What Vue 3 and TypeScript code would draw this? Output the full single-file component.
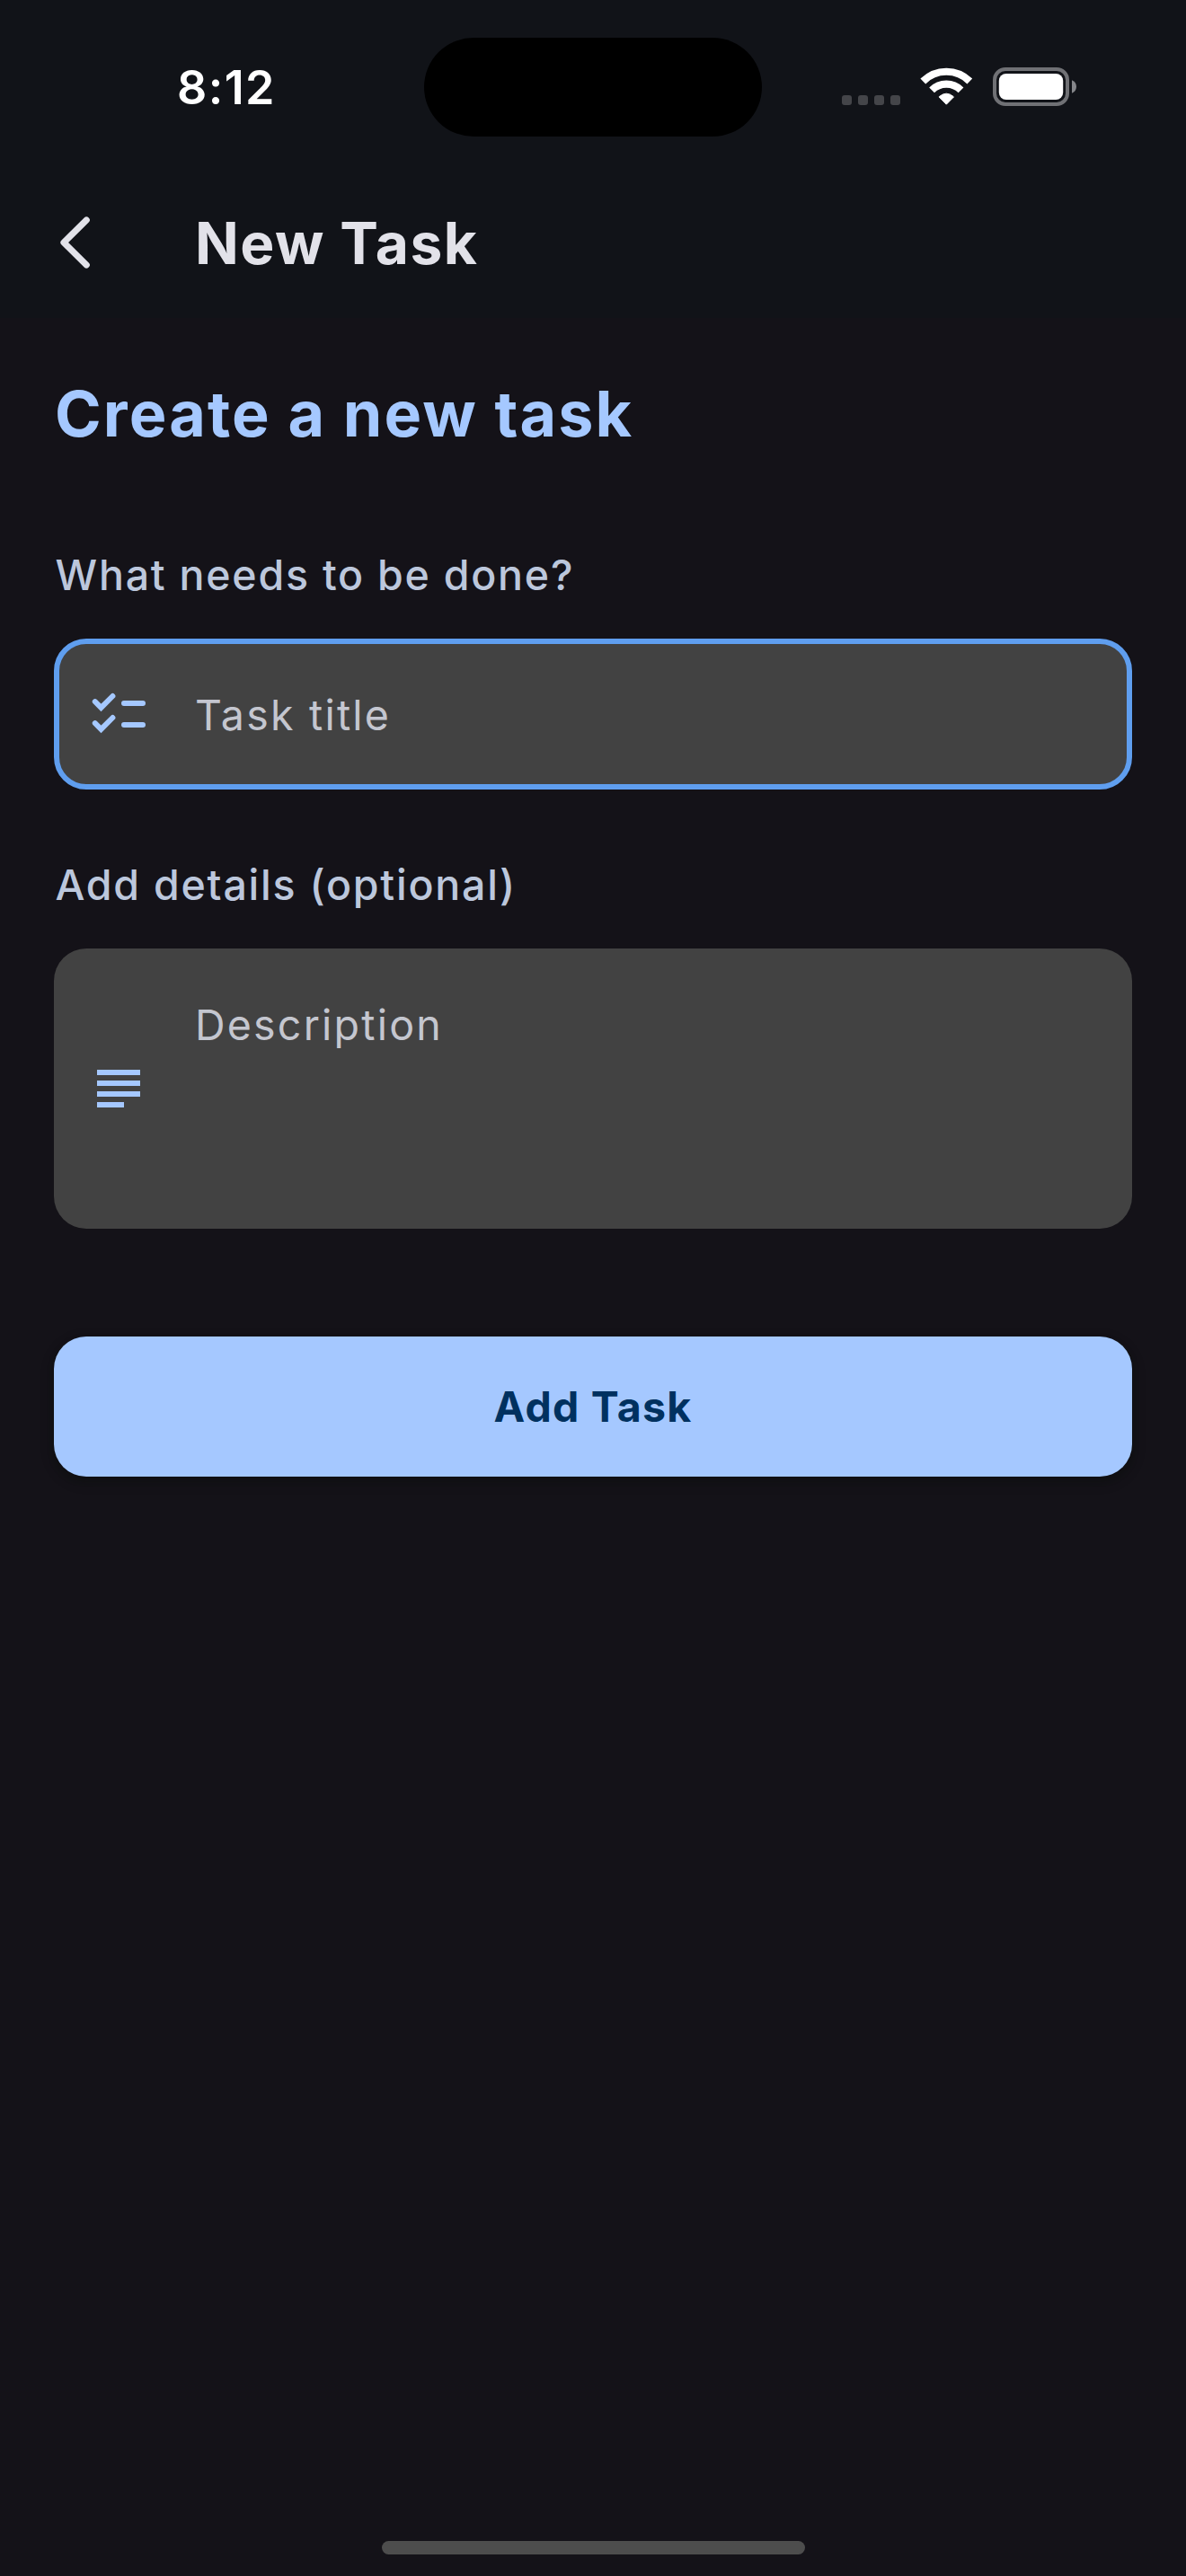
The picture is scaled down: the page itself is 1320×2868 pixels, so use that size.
<script setup lang="ts">
interface Field {
  id: string
  label: string
  placeholder: string
  icon: 'checklist' | 'notes'
  focused: boolean
  multiline: boolean
}

const fields: Field[] = [
  {
    id: 'title',
    label: 'What needs to be done?',
    placeholder: 'Task title',
    icon: 'checklist',
    focused: true,
    multiline: false,
  },
  {
    id: 'details',
    label: 'Add details (optional)',
    placeholder: 'Description',
    icon: 'notes',
    focused: false,
    multiline: true,
  },
]
</script>

<template>
  <div class="screen">
    <header class="top">
      <div class="status">
        <span class="clock">8:12</span>
        <div class="island"></div>
        <div class="indicators">
          <div class="signal"><i v-for="n in 4" :key="n"></i></div>
          <svg class="wifi" width="60" height="44" viewBox="0 0 60 44">
            <g fill="none" stroke="#fff" stroke-width="8.2">
              <path d="M3.3 16.5A36.8 36.8 0 0 1 55.3 16.5" />
              <path d="M13.1 26.3A22.9 22.9 0 0 1 45.5 26.3" />
            </g>
            <path
              d="M29.3 42.2L21.1 33.9Q29.3 26.4 37.5 33.9Z"
              fill="#fff"
              stroke="#fff"
              stroke-width="1"
              stroke-linejoin="round"
            />
          </svg>
          <svg class="battery" width="94" height="43" viewBox="0 0 94 43">
            <rect x="2" y="2" width="81" height="39" rx="12" fill="none" stroke="#707175" stroke-width="4" />
            <rect x="6.8" y="7" width="71.4" height="29" rx="8" fill="#fff" />
            <path d="M88 14.2C91.2 15.4 93 18.2 93 21.5S91.2 27.6 88 28.8Z" fill="#85868a" />
          </svg>
        </div>
      </div>
      <div class="appbar">
        <svg class="back" width="40" height="64" viewBox="0 0 40 64">
          <path
            d="M32.2 7L7 32L32.2 57"
            fill="none"
            stroke="#e2e2e9"
            stroke-width="7.2"
            stroke-linecap="round"
            stroke-linejoin="round"
          />
        </svg>
        <h1>New Task</h1>
      </div>
    </header>

    <main>
      <h2>Create a new task</h2>
      <section v-for="f in fields" :key="f.id" class="group">
        <div class="label">{{ f.label }}</div>
        <div class="field" :class="{ focused: f.focused, multiline: f.multiline }">
          <svg v-if="f.icon === 'checklist'" width="72" height="72" viewBox="0 0 72 72">
            <g fill="none" stroke="#a5c8ff" stroke-width="6" stroke-linecap="round">
              <path stroke-linejoin="miter" d="M9.8 22.2L16.5 28.9L29.4 16" />
              <path stroke-linejoin="miter" d="M9.8 46.2L16.5 52.9L29.4 40" />
              <path d="M42 24H63M42 48H63" />
            </g>
          </svg>
          <svg v-else width="72" height="72" viewBox="0 0 72 72">
            <path fill="#a5c8ff" d="M12 15h48v6H12zM12 27h48v6H12zM12 39h48v6H12zM12 51h30v6H12z" />
          </svg>
          <span class="hint">{{ f.placeholder }}</span>
        </div>
      </section>
      <button type="button">Add Task</button>
    </main>

    <footer><div class="home"></div></footer>
  </div>
</template>

<style>
body {
  background: #141218;
}
</style>

<style scoped>
.screen {
  box-sizing: border-box;
  width: 1320px;
  height: 2868px;
  display: flex;
  flex-direction: column;
  overflow: hidden;
  background: #141218;
  font-family: Inter, 'Liberation Sans', sans-serif;
}

.top {
  height: 354px;
  background: #111318;
}

.status {
  display: grid;
  grid-template-columns: 472px 376px 472px;
  align-items: start;
  height: 186px;
}

.clock {
  padding: 68px 0 0 197px;
  line-height: 60px;
  font-size: 52px;
  font-weight: 600;
  letter-spacing: 1.38px;
  color: #fff;
}

.island {
  height: 110px;
  margin-top: 42px;
  border-radius: 55px;
  background: #000;
}

.indicators {
  display: flex;
  align-items: flex-start;
  padding: 74px 0 0 89px;
}

.signal {
  display: flex;
  gap: 7px;
  padding-top: 32px;
  margin-right: 22px;
}

.signal i {
  width: 11px;
  height: 11px;
  border-radius: 3px;
  background: #444549;
}

.wifi {
  display: block;
}

.battery {
  display: block;
  margin: 1px 0 0 21px;
}

.appbar {
  display: flex;
  align-items: center;
  height: 168px;
  padding-left: 64px;
}

.back {
  display: block;
}

h1 {
  margin: 2px 0 0 113px;
  line-height: 80px;
  font-size: 64px;
  font-weight: 700;
  letter-spacing: 1.44px;
  color: #e2e2e9;
}

main {
  flex: 1;
  padding: 60px 60px 0;
}

h2 {
  margin: 0 0 100px 1px;
  line-height: 93px;
  font-size: 70px;
  font-weight: 700;
  letter-spacing: 2.08px;
  color: #a5c8ff;
}

.group {
  margin-bottom: 73px;
}

.label {
  margin-bottom: 38px;
  padding-left: 1.5px;
  line-height: 66px;
  font-size: 46.5px;
  font-weight: 450;
  letter-spacing: 1.76px;
  color: #bcc7dc;
}

.field {
  box-sizing: border-box;
  display: flex;
  align-items: center;
  height: 168px;
  padding: 0 36px;
  border-radius: 36px;
  background: #424242;
}

.focused {
  padding: 0 30px;
  border: 6px solid #5f9eef;
}

.multiline {
  height: 312px;
}

.hint {
  margin: 2px 0 0 49px;
  line-height: 66px;
  font-size: 46.5px;
  letter-spacing: 2.22px;
  color: #c4c6cf;
}

.multiline .hint {
  align-self: flex-start;
  margin-top: 52px;
}

button {
  display: block;
  width: 1200px;
  height: 156px;
  margin-top: 120px;
  padding: 0;
  border: 0;
  border-radius: 36px;
  background: #a5c8ff;
  box-shadow: 0 4px 8px rgba(0, 0, 0, 0.2), 0 5px 16px rgba(8, 24, 8, 0.2);
  font: 700 46.5px/66px Inter, 'Liberation Sans', sans-serif;
  letter-spacing: 1.25px;
  color: #00315f;
}

footer {
  display: flex;
  justify-content: center;
  height: 39px;
}

.home {
  width: 471px;
  height: 15px;
  border-radius: 8px;
  background: #4d4d4d;
}
</style>
